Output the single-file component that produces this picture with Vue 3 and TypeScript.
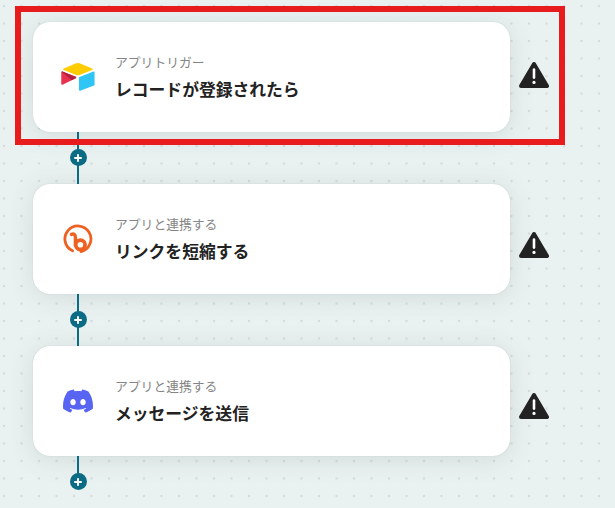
<template>
  <main class="canvas">
    <section class="flow">
      <template v-for="step in steps" :key="step.id">
        <div class="step-row">
          <div class="step-card">
            <div class="step-icon">
              <!-- Airtable -->
              <svg v-if="step.icon === 'airtable'" width="38" height="32" viewBox="0 0 200 170">
                <path fill="#ffcc00" d="M90.039 12.368 24.079 39.66c-3.667 1.519-3.63 6.729.062 8.192l66.235 26.266a24.58 24.58 0 0 0 18.12 0l66.236-26.266c3.69-1.463 3.729-6.673.062-8.192l-65.96-27.292a24.58 24.58 0 0 0-18.795 0" />
                <path fill="#2fc5f7" d="M105.312 88.46v65.617c0 3.12 3.147 5.258 6.048 4.108l73.806-28.648a4.42 4.42 0 0 0 2.79-4.108V59.813c0-3.121-3.147-5.258-6.048-4.108l-73.806 28.648a4.42 4.42 0 0 0-2.79 4.108" />
                <path fill="#e8304f" d="M88.078 91.846l-21.904 10.576-2.224 1.075-46.238 22.155c-2.93 1.414-6.672-.722-6.672-3.978V60.088c0-1.178.604-2.195 1.414-2.96a5 5 0 0 1 1.12-.84c1.104-.663 2.68-.84 4.02-.31L87.71 83.76c3.564 1.414 3.844 6.408.368 8.087" />
                <path fill="#b3213f" d="M88.078 91.846l-21.904 10.576-53.72-45.295a5 5 0 0 1 1.12-.84c1.104-.663 2.68-.84 4.02-.31L87.71 83.76c3.564 1.414 3.844 6.408.368 8.087" />
              </svg>
              <!-- Bitly -->
              <svg v-else-if="step.icon === 'bitly'" width="30" height="30" viewBox="0 0 30 30" fill="none" stroke="#ee6123">
                <path stroke-width="2.8" stroke-linecap="round" d="M9.5 26.8A13 13 0 1 1 18 27.6" />
                <path stroke-width="3.4" stroke-linecap="round" d="M8.4 10.4c2.4-1 4 .2 4 2.8v8" />
                <circle cx="17.4" cy="20.8" r="4.7" stroke-width="3.8" />
              </svg>
              <!-- Discord -->
              <svg v-else width="30" height="30" viewBox="0 0 24 24">
                <path fill="#5865f2" d="M20.317 4.3698a19.7913 19.7913 0 00-4.8851-1.5152.0741.0741 0 00-.0785.0371c-.211.3753-.4447.8648-.6083 1.2495-1.8447-.2762-3.68-.2762-5.4868 0-.1636-.3933-.4058-.8742-.6177-1.2495a.077.077 0 00-.0785-.037 19.7363 19.7363 0 00-4.8852 1.515.0699.0699 0 00-.0321.0277C.5334 9.0458-.319 13.5799.0992 18.0578a.0824.0824 0 00.0312.0561c2.0528 1.5076 4.0413 2.4228 5.9929 3.0294a.0777.0777 0 00.0842-.0276c.4616-.6304.8731-1.2952 1.226-1.9942a.076.076 0 00-.0416-.1057c-.6528-.2476-1.2743-.5495-1.8722-.8923a.077.077 0 01-.0076-.1277c.1258-.0943.2517-.1923.3718-.2914a.0743.0743 0 01.0776-.0105c3.9278 1.7933 8.18 1.7933 12.0614 0a.0739.0739 0 01.0785.0095c.1202.099.246.1981.3728.2924a.077.077 0 01-.0066.1276 12.2986 12.2986 0 01-1.873.8914.0766.0766 0 00-.0407.1067c.3604.698.7719 1.3628 1.225 1.9932a.076.076 0 00.0842.0286c1.961-.6067 3.9495-1.5219 6.0023-3.0294a.077.077 0 00.0313-.0552c.5004-5.177-.8382-9.6739-3.5485-13.6604a.061.061 0 00-.0312-.0286zM8.02 15.3312c-1.1825 0-2.1569-1.0857-2.1569-2.419 0-1.3332.9555-2.4189 2.157-2.4189 1.2108 0 2.1757 1.0952 2.1568 2.419 0 1.3332-.9555 2.4189-2.1569 2.4189zm7.9748 0c-1.1825 0-2.1569-1.0857-2.1569-2.419 0-1.3332.9554-2.4189 2.1569-2.4189 1.2108 0 2.1757 1.0952 2.1568 2.419 0 1.3332-.946 2.4189-2.1568 2.4189Z" />
              </svg>
            </div>
            <div class="step-text">
              <p class="step-label">{{ step.label }}</p>
              <p class="step-title">{{ step.title }}</p>
            </div>
          </div>
          <svg class="warn" :style="{ marginTop: step.warnTop + 'px' }" width="30" height="28" viewBox="0 0 30 28">
            <path fill="#222" stroke="#222" stroke-width="4" stroke-linejoin="round" d="M15 3 28 25H2Z" />
            <path stroke="#fff" stroke-width="2.6" stroke-linecap="round" d="M15 8.6v8" />
            <circle cx="15" cy="21.4" r="1.6" fill="#fff" />
          </svg>
        </div>
        <div class="connector" :class="{ last: step.last }">
          <span class="add-btn"></span>
        </div>
      </template>
    </section>
    <!-- Highlight frame -->
    <div class="highlight"></div>
  </main>
</template>

<script setup lang="ts">
type Step = {
  id: number;
  icon: "airtable" | "bitly" | "discord";
  label: string;
  title: string;
  warnTop: number;
  last?: boolean;
};

const steps: Step[] = [
  { id: 1, icon: "airtable", label: "アプリトリガー", title: "レコードが登録されたら", warnTop: 39 },
  { id: 2, icon: "bitly", label: "アプリと連携する", title: "リンクを短縮する", warnTop: 47 },
  { id: 3, icon: "discord", label: "アプリと連携する", title: "メッセージを送信", warnTop: 46, last: true },
];
</script>

<style scoped>
.canvas {
  position: relative;
  height: 508px;
  overflow: hidden;
  background-color: #eaf2f1;
  background-image: radial-gradient(circle, #d3dcdb 1.1px, transparent 1.6px);
  background-size: 17.5px 17.5px;
  background-position: -4.75px -2.75px;
  font-family: "Noto Sans CJK JP", "Noto Sans", sans-serif;
}

.flow {
  display: flex;
  flex-direction: column;
  padding: 22px 0 0 33px;
}

.step-row {
  display: flex;
  align-items: flex-start;
  gap: 9px;
}

.step-card {
  flex: none;
  width: 477px;
  height: 110px;
  box-sizing: border-box;
  display: flex;
  align-items: center;
  gap: 21px;
  padding-left: 28px;
  background: #fff;
  border-radius: 17px;
  box-shadow: 0 0 1px rgba(40, 70, 70, 0.25), 0 3px 26px rgba(40, 80, 80, 0.13);
}

.step-icon {
  flex: none;
  width: 33px;
  display: flex;
  justify-content: center;
  align-items: center;
}

.step-icon svg {
  flex: none;
}

.step-label {
  margin: 0 0 0;
  font-size: 12.8px;
  line-height: 18px;
  color: #858585;
}

.step-title {
  margin: 6px 0 0;
  font-size: 16.8px;
  line-height: 24px;
  font-weight: 700;
  color: #222;
}

.warn {
  flex: none;
}

.connector {
  position: relative;
  width: 2px;
  height: 52px;
  margin-left: 44px;
  background: #0b6a84;
}

.connector.last {
  height: 24px;
}

.add-btn {
  position: absolute;
  left: -7.5px;
  top: 17px;
  width: 17px;
  height: 17px;
  border-radius: 50%;
  background: #0b6a84;
}

.add-btn::before,
.add-btn::after {
  content: "";
  position: absolute;
  background: #fff;
  border-radius: 1px;
}

.add-btn::before {
  left: 4.5px;
  top: 7.5px;
  width: 8px;
  height: 2px;
}

.add-btn::after {
  left: 7.5px;
  top: 4.5px;
  width: 2px;
  height: 8px;
}

.highlight {
  position: absolute;
  left: 15px;
  top: 6px;
  width: 550px;
  height: 139px;
  box-sizing: border-box;
  border: 6px solid #e81c1c;
}
</style>
